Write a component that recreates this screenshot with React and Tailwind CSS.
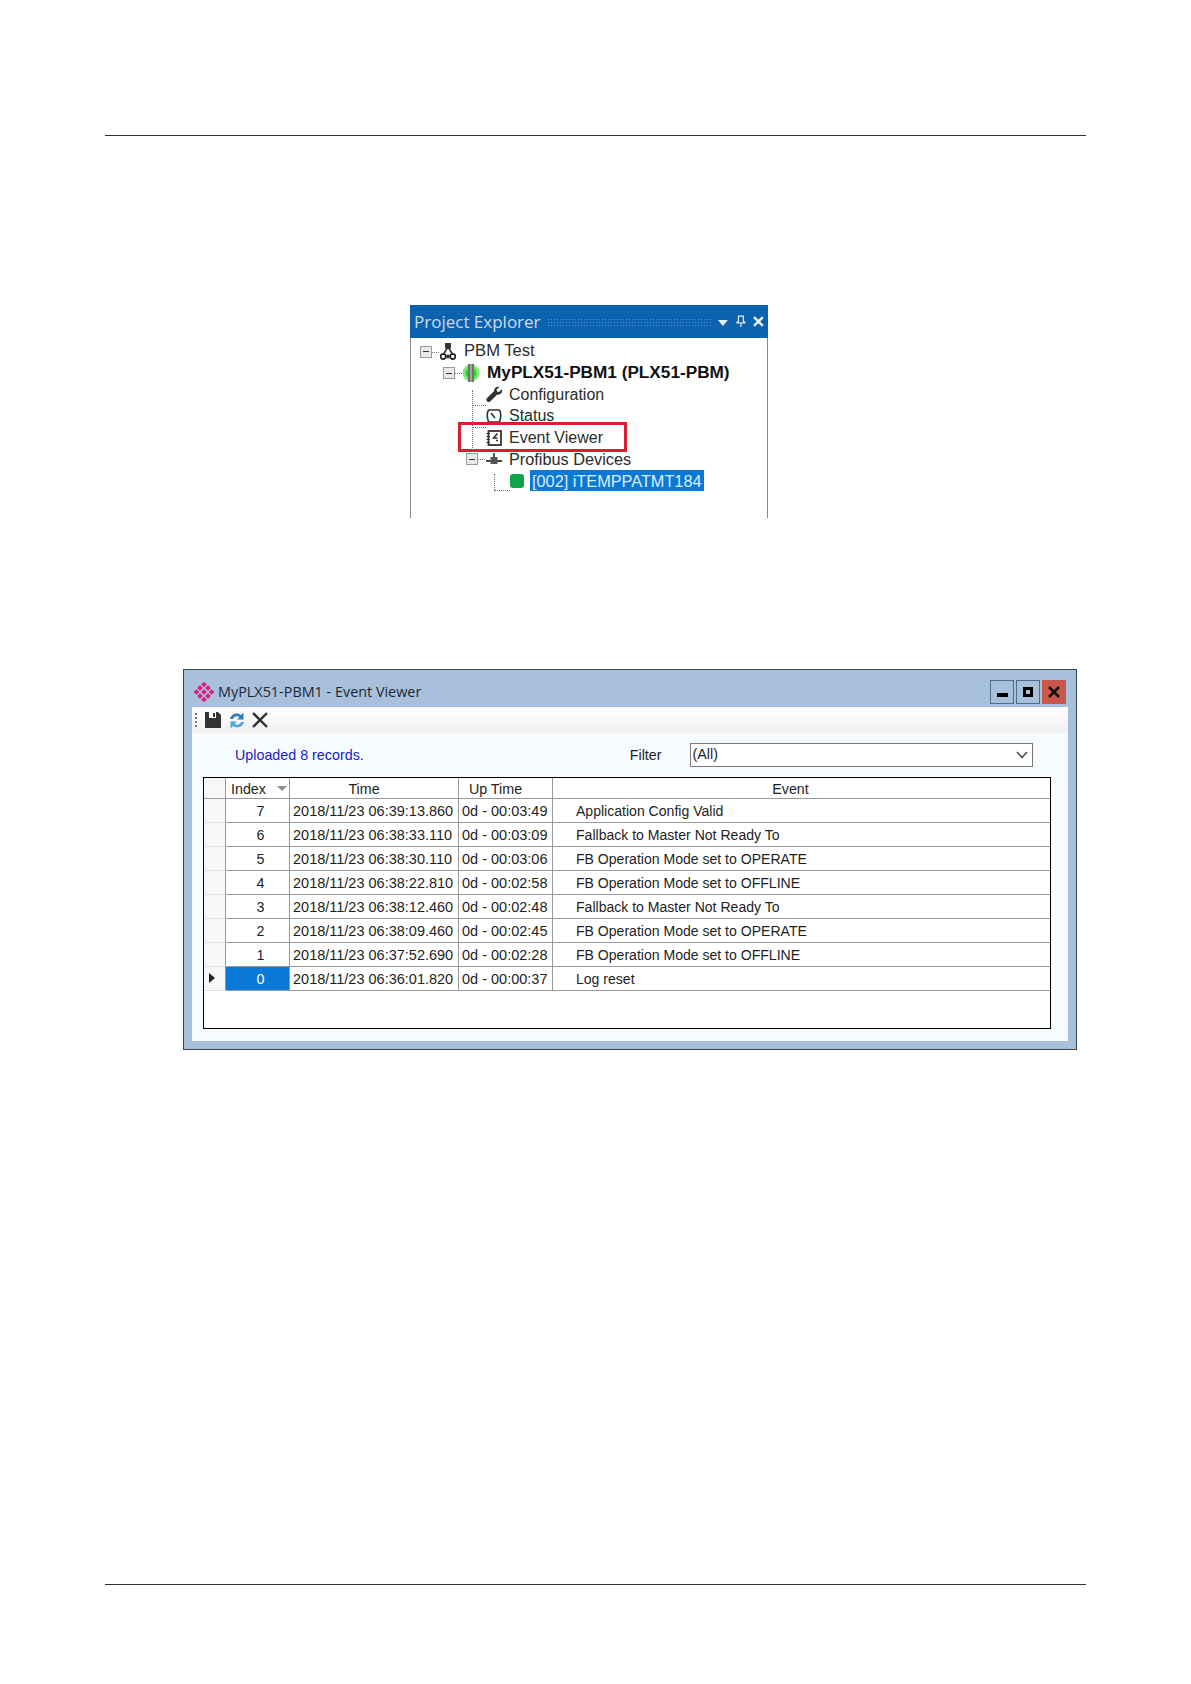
import React from 'react'

const events = [
  ['7', '2018/11/23 06:39:13.860', '0d - 00:03:49', 'Application Config Valid'],
  ['6', '2018/11/23 06:38:33.110', '0d - 00:03:09', 'Fallback to Master Not Ready To'],
  ['5', '2018/11/23 06:38:30.110', '0d - 00:03:06', 'FB Operation Mode set to OPERATE'],
  ['4', '2018/11/23 06:38:22.810', '0d - 00:02:58', 'FB Operation Mode set to OFFLINE'],
  ['3', '2018/11/23 06:38:12.460', '0d - 00:02:48', 'Fallback to Master Not Ready To'],
  ['2', '2018/11/23 06:38:09.460', '0d - 00:02:45', 'FB Operation Mode set to OPERATE'],
  ['1', '2018/11/23 06:37:52.690', '0d - 00:02:28', 'FB Operation Mode set to OFFLINE'],
  ['0', '2018/11/23 06:36:01.820', '0d - 00:00:37', 'Log reset'],
]

const gridCols = 'grid grid-cols-[22px_64px_169px_94px_1fr]'

const ExpandBox = () => (
  <span className="relative flex h-[12px] w-[12px] shrink-0 items-center justify-center border border-[#9a9a9a] bg-[#e8e8e8]">
    <span className="h-px w-[6px] bg-[#333]" />
    <span className="absolute left-[11px] top-[5px] w-[7px] border-t border-dotted border-[#777]" />
  </span>
)

const NetworkIcon = () => (
  <svg width="16" height="17" viewBox="0 0 16 17" className="shrink-0">
    <path d="M8 4 L3.5 11 M8 4 L12.5 11 M4 13.5 H12" stroke="#333" strokeWidth="1.5" fill="none" />
    <rect x="5" y="0" width="6" height="5.5" fill="#333" />
    <circle cx="3.2" cy="13.5" r="2.6" fill="#fff" stroke="#222" strokeWidth="1.6" />
    <circle cx="12.8" cy="13.5" r="2.6" fill="#fff" stroke="#222" strokeWidth="1.6" />
    <circle cx="8" cy="13.5" r="2" fill="#333" />
  </svg>
)

const ModuleIcon = () => (
  <svg width="18" height="20" viewBox="0 0 18 20" className="shrink-0">
    <circle cx="9" cy="10" r="8.5" fill="#7dea74" />
    <circle cx="9" cy="10" r="5.5" fill="#2fd02f" />
    <rect x="6" y="1" width="6" height="18" fill="#6b7568" />
    <rect x="8" y="1" width="2" height="18" fill="#9aa596" />
  </svg>
)

const WrenchIcon = () => (
  <svg width="17" height="17" viewBox="0 0 17 17" className="shrink-0">
    <path d="M16 3.2 L13 6 L11 5.6 L10.6 3.6 L13.4 0.9 C10.6 0 7.8 2 8 5.2 L1 12 C0 13 0.3 14.6 1.2 15.4 C2.2 16.3 3.6 16.3 4.5 15.3 L11.3 8.6 C14.6 9 16.9 6.4 16 3.2 Z" fill="#333" />
  </svg>
)

const GaugeIcon = () => (
  <svg width="16" height="16" viewBox="0 0 16 16" className="shrink-0">
    <path d="M2.5 14 C0.5 9 1 3 3 2 H13 C15 3 15.5 9 13.5 14 Z" fill="#fff" stroke="#333" strokeWidth="1.6" />
    <path d="M5 5 L9 10" stroke="#333" strokeWidth="1.6" />
  </svg>
)

const LogIcon = () => (
  <svg width="16" height="16" viewBox="0 0 16 16" className="shrink-0">
    <rect x="2.5" y="1" width="12.5" height="14" fill="#fff" stroke="#333" strokeWidth="1.8" />
    <path d="M0.5 3.5 H4 M0.5 6.5 H4 M0.5 9.5 H4 M0.5 12.5 H4" stroke="#333" strokeWidth="1.2" />
    <path d="M11.5 3.5 L7.5 8 H11.5 M10 10.5 H12" stroke="#333" strokeWidth="1.6" fill="none" />
  </svg>
)

const BusIcon = () => (
  <svg width="16" height="12" viewBox="0 0 16 12" className="shrink-0">
    <path d="M0 8 H16" stroke="#444" strokeWidth="2" />
    <rect x="4.5" y="4" width="7" height="7" fill="#555" />
    <rect x="7" y="0" width="2" height="5" fill="#555" />
  </svg>
)

const TreeRow = ({ className = '', children }) => (
  <div className={`relative flex h-[21.5px] items-center font-['Liberation_Sans',sans-serif] text-[16px] text-[#2b2b2b] ${className}`}>
    {children}
  </div>
)

const ProjectExplorer = () => (
  <div className="relative ml-[305px] h-[213px] w-[358px] border-x border-[#8b8b8b] bg-white">
    <div className="-mx-px flex h-[33px] items-center bg-[#0b62ae] pl-[4px] pr-[4px]">
      <span className="w-[128px] shrink-0 whitespace-nowrap font-['Open_Sans',sans-serif] text-[17px] leading-none text-[#cfdcec]">Project Explorer</span>
      <span className="ml-[5px] h-[8px] w-[167px] bg-[radial-gradient(#5f97c9_1px,transparent_1px)] bg-[length:3px_3px]" />
      <svg width="10" height="6" viewBox="0 0 10 6" className="ml-[7px] mt-[2px]"><path d="M0 0 H10 L5 6 Z" fill="#e6eef7" /></svg>
      <svg width="10" height="12" viewBox="0 0 10 12" className="ml-[8px] -mt-[2px]"><path d="M2.5 1 H7.5 V7 H9 V8 H1 V7 H2.5 Z M5 8 V12" stroke="#e6eef7" strokeWidth="1.2" fill="none" /></svg>
      <svg width="11" height="11" viewBox="0 0 11 11" className="ml-[7px] -mt-[1px]"><path d="M1 1 L10 10 M10 1 L1 10" stroke="#f2f6fb" strokeWidth="2.4" /></svg>
    </div>

    <div className="relative pt-[3px]">
      <TreeRow className="pl-[9px]">
        <ExpandBox />
        <span className="ml-[8px]"><NetworkIcon /></span>
        <span className="ml-[8px] text-[16.6px]">PBM Test</span>
      </TreeRow>
      <TreeRow className="pl-[32px]">
        <ExpandBox />
        <span className="ml-[7px]"><ModuleIcon /></span>
        <span className="ml-[7px] text-[17.2px] font-bold text-[#111]">MyPLX51-PBM1 (PLX51-PBM)</span>
      </TreeRow>
      <TreeRow className="pl-[75px]">
        <WrenchIcon />
        <span className="ml-[6px]">Configuration</span>
      </TreeRow>
      <TreeRow className="pl-[75px]">
        <GaugeIcon />
        <span className="ml-[7px]">Status</span>
      </TreeRow>
      <TreeRow className="pl-[75px]">
        <div className="absolute left-[47px] top-[-5px] h-[30px] w-[169px] border-[3px] border-[#d81f2d] bg-white" />
        <span className="relative"><LogIcon /></span>
        <span className="relative ml-[7px]">Event Viewer</span>
      </TreeRow>
      <TreeRow className="pl-[55px]">
        <ExpandBox />
        <span className="ml-[8px]"><BusIcon /></span>
        <span className="ml-[7px] text-[16.3px]">Profibus Devices</span>
      </TreeRow>
      <TreeRow className="pl-[99px]">
        <span className="h-[14px] w-[14px] shrink-0 rounded-[3px] bg-[#0fa64a]" />
        <span className="ml-[6px] flex h-[21px] w-[174px] items-center bg-[#0a78d7] pl-[2px] text-[16.3px] text-[#dfeefc]">[002] iTEMPPATMT184</span>
      </TreeRow>

      <span className="absolute left-[61px] top-[52px] h-[62px] border-l border-dotted border-[#777]" />
      <span className="absolute left-[61px] top-[67px] w-[14px] border-t border-dotted border-[#777]" />
      <span className="absolute left-[61px] top-[89px] w-[14px] border-t border-dotted border-[#777]" />
      <span className="absolute left-[61px] top-[111px] w-[14px] border-t border-dotted border-[#777]" />
      <span className="absolute left-[83px] top-[136px] h-[16px] border-l border-dotted border-[#777]" />
      <span className="absolute left-[83px] top-[152px] w-[16px] border-t border-dotted border-[#777]" />
    </div>
  </div>
)

const LogoIcon = () => (
  <svg width="20" height="20" viewBox="0 0 20 20" className="shrink-0">
    {[[10, 2.5], [6, 6], [14, 6], [2.5, 10], [10, 10], [17.5, 10], [6, 14], [14, 14], [10, 17.5]].map(([x, y]) => (
      <rect key={`${x}-${y}`} x={x - 2} y={y - 2} width="4" height="4" fill="#e0197d" transform={`rotate(45 ${x} ${y})`} />
    ))}
  </svg>
)

const ToolbarIcons = () => (
  <div className="ml-[8px] flex items-center">
    <svg width="16" height="16" viewBox="0 0 16 16">
      <path d="M0 0 H13 L16 3 V16 H0 Z" fill="#333" />
      <rect x="4" y="0" width="7" height="6" fill="#fff" />
      <rect x="8" y="1" width="2" height="4" fill="#333" />
    </svg>
    <svg width="16" height="19" viewBox="0 0 16 19" className="ml-[8px]">
      <path d="M1 8 C2 3 8 1 12 4 L14.5 1.5 V8.5 H8 L10.5 6 C8 4.5 5 5.5 4 8 Z" fill="#2d7fb8" />
      <path d="M15 11 C14 16 8 18 4 15 L1.5 17.5 V10.5 H8 L5.5 13 C8 14.5 11 13.5 12 11 Z" fill="#4aa8de" />
    </svg>
    <svg width="16" height="16" viewBox="0 0 16 16" className="ml-[7px]">
      <path d="M1 1 L15 15 M15 1 L1 15" stroke="#2f2f2f" strokeWidth="2.4" />
    </svg>
  </div>
)

const WindowButton = ({ className = '', children }) => (
  <span className={`flex h-[24px] w-[24px] items-center justify-center border border-[#4f6f8f] ${className}`}>
    {children}
  </span>
)

const EventViewer = () => (
  <div className="ml-[78px] mt-[151px] h-[381px] w-[894px] border border-[#3c4650] bg-[#a8c0dc] px-[8px] pb-[8px]">
    <div className="flex h-[37px] items-end pb-[3px] pl-[2px] pr-[2px]">
      <span className="mb-[2px]"><LogoIcon /></span>
      <span className="ml-[4px] font-['Open_Sans',sans-serif] text-[14.4px] leading-[24px] text-[#1c2733]">MyPLX51-PBM1 - Event Viewer</span>
      <div className="ml-auto flex gap-[2px]">
        <WindowButton><span className="mt-[6px] h-[4px] w-[11px] bg-black" /></WindowButton>
        <WindowButton><span className="h-[10px] w-[10px] border-[3px] border-black" /></WindowButton>
        <WindowButton className="border-[#c8584a] bg-[#c8584a]">
          <svg width="12" height="12" viewBox="0 0 12 12"><path d="M1 1 L11 11 M11 1 L1 11" stroke="#111" strokeWidth="2.6" /></svg>
        </WindowButton>
      </div>
    </div>

    <div className="h-[334px] bg-[#f6fbfe] font-['Liberation_Sans',sans-serif] text-[14.3px] text-[#1e1e1e]">
      <div className="flex h-[26px] items-center bg-gradient-to-b from-white to-[#f0f0f0] pl-[3px]">
        <span className="h-[14px] border-l-2 border-dotted border-[#777]" />
        <ToolbarIcons />
      </div>

      <div className="flex h-[44px] items-center pl-[43px] pr-[35px] pt-[1px]">
        <span className="text-[#1a1ac8]">Uploaded 8 records.</span>
        <span className="ml-[266px] mt-[1px]">Filter</span>
        <div className="-mt-[2px] ml-[28px] flex h-[24px] flex-1 items-center border border-[#7a7a7a] bg-white pl-[2px] pr-[4px]">
          <span>(All)</span>
          <svg width="12" height="8" viewBox="0 0 12 8" className="ml-auto"><path d="M1 1 L6 6.5 L11 1" stroke="#444" strokeWidth="1.5" fill="none" /></svg>
        </div>
      </div>

      <div className="ml-[11px] mr-[17px] h-[252px] border border-black bg-white">
        <div className={`${gridCols} h-[21px] grid-rows-[21px] leading-[22px]`}>
          <div className="border-b border-r border-[#999] border-b-[#999] bg-[#f7f7f7]" />
          <div className="relative border-b border-r border-[#999] pl-[5px]">
            Index
            <svg width="10" height="5" viewBox="0 0 10 5" className="absolute right-[2px] top-[8px]"><path d="M0 0 H10 L5 5 Z" fill="#8d8d8d" /></svg>
          </div>
          <div className="border-b border-r border-[#999] pr-[20px] text-center">Time</div>
          <div className="border-b border-r border-[#999] pr-[20px] text-center">Up Time</div>
          <div className="border-b border-[#999] pr-[22px] text-center">Event</div>
        </div>
        {events.map(([index, time, upTime, text]) => (
          <div key={index} className={`${gridCols} h-[24px] grid-rows-[24px] leading-[25px]`}>
            <div className="relative border-b border-r border-[#999] border-b-[#e2e2e2] bg-[#f7f7f7]">
              {index === '0' && (
                <svg width="6" height="10" viewBox="0 0 6 10" className="absolute left-[5px] top-[6px]"><path d="M0 0 L6 5 L0 10 Z" fill="#222" /></svg>
              )}
            </div>
            <div className={index === '0' ? 'border-b border-r border-[#999] bg-[#0a78d7] pl-[6px] text-center text-white' : 'border-b border-r border-[#999] pl-[6px] text-center'}>
              {index}
            </div>
            <div className="border-b border-r border-[#999] pl-[3px] text-[14.5px]">{time}</div>
            <div className="border-b border-r border-[#999] pl-[3px] text-[14.5px]">{upTime}</div>
            <div className="border-b border-[#999] pl-[23px] text-[14.05px]">{text}</div>
          </div>
        ))}
      </div>
    </div>
  </div>
)

const App = () => {
  return (
    <div className="flex h-[1684px] w-[1191px] flex-col bg-white px-[105px] pb-[99px] pt-[135px]">
      <div className="h-px bg-[#333]" />
      <div className="mt-[169px]">
        <ProjectExplorer />
      </div>
      <EventViewer />
      <div className="mt-auto h-px bg-[#333]" />
    </div>
  )
}

export default App
